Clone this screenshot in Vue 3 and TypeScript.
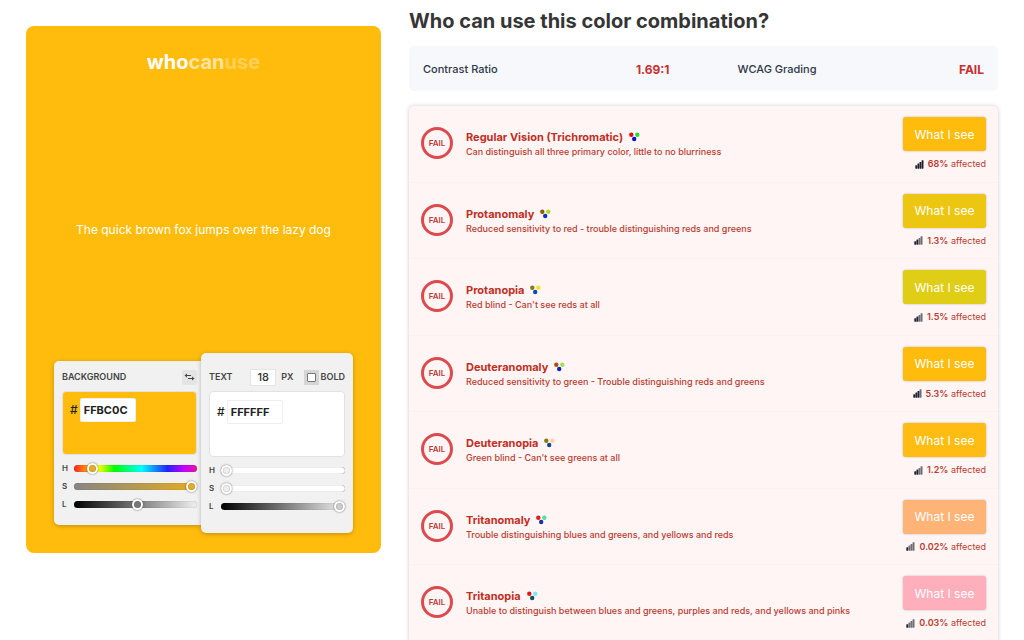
<script setup lang="ts">
import { ref } from 'vue'

interface Vision {
  name: string
  text: string
  dots: [string, string, string]
  color: string
  share: string
  bars: number
}

const visions: Vision[] = [
  { name: 'Regular Vision (Trichromatic)', text: 'Can distinguish all three primary color, little to no blurriness', dots: ['#e01010', '#22dd33', '#1010d0'], color: '#ffbc0c', share: '68%', bars: 4 },
  { name: 'Protanomaly', text: 'Reduced sensitivity to red - trouble distinguishing reds and greens', dots: ['#8f5a10', '#a5dd22', '#1030c8'], color: '#edc611', share: '1.3%', bars: 2 },
  { name: 'Protanopia', text: "Red blind - Can't see reds at all", dots: ['#857a18', '#f0e62a', '#1048b4'], color: '#dfcd16', share: '1.5%', bars: 2 },
  { name: 'Deuteranomaly', text: 'Reduced sensitivity to green - Trouble distinguishing reds and greens', dots: ['#a85018', '#a0e060', '#1020b8'], color: '#ffbc0c', share: '5.3%', bars: 3 },
  { name: 'Deuteranopia', text: "Green blind - Can't see greens at all", dots: ['#8a7a10', '#ffd0a4', '#10459c'], color: '#ffbc12', share: '1.2%', bars: 2 },
  { name: 'Tritanomaly', text: 'Trouble distinguishing blues and greens, and yellows and reds', dots: ['#e01c20', '#52df9a', '#1830a8'], color: '#ffb477', share: '0.02%', bars: 1 },
  { name: 'Tritanopia', text: 'Unable to distinguish between blues and greens, purples and reds, and yellows and pinks', dots: ['#e01820', '#7fe6f0', '#0c5258'], color: '#ffafbb', share: '0.03%', bars: 1 },
]

const background = ref('FFBC0C')
const foreground = ref('FFFFFF')
const fontSize = ref('18')
const bold = ref(false)
const bgHsl = ref({ h: 43, s: 100, l: 52 })
const textHsl = ref({ h: 0, s: 0, l: 100 })
</script>

<template>
  <main class="page">
    <section class="preview">
      <h2 class="logo"><span>who</span><span class="can">can</span><span class="use">use</span></h2>
      <p class="sample">The quick brown fox jumps over the lazy dog</p>
      <div class="panels">
        <div class="panel panel-bg">
          <div class="head">
            <span class="label">BACKGROUND</span>
            <button class="swap" type="button" aria-label="Swap colors">
              <svg width="11" height="8" viewBox="0 0 11 8" fill="none" stroke="#444" stroke-width="1">
                <path d="M2 2.5H7" />
                <path d="M4 5.5H9" />
                <path d="M3 0.5L0.5 2.5L3 4.5Z" fill="#444" stroke="none" />
                <path d="M8 3.5L10.5 5.5L8 7.5Z" fill="#444" stroke="none" />
              </svg>
            </button>
          </div>
          <div class="swatch swatch-bg">
            <label for="bg-hex">#</label>
            <input id="bg-hex" v-model="background" class="hex" type="text" />
          </div>
          <div class="slider">
            <label for="bg-h">H</label>
            <input id="bg-h" v-model="bgHsl.h" class="hue" type="range" min="0" max="360" />
          </div>
          <div class="slider">
            <label for="bg-s">S</label>
            <input id="bg-s" v-model="bgHsl.s" class="sat" type="range" min="0" max="100" />
          </div>
          <div class="slider">
            <label for="bg-l">L</label>
            <input id="bg-l" v-model="bgHsl.l" class="lum" type="range" min="0" max="100" />
          </div>
        </div>
        <div class="panel panel-text">
          <div class="head">
            <span class="label">TEXT</span>
            <input id="size" v-model="fontSize" class="size" type="text" />
            <label class="label unit" for="size">PX</label>
            <label class="label bold"><span class="tick"><input v-model="bold" type="checkbox" /></span>BOLD</label>
          </div>
          <div class="swatch swatch-text">
            <label for="text-hex">#</label>
            <input id="text-hex" v-model="foreground" class="hex" type="text" />
          </div>
          <div class="slider">
            <label for="text-h">H</label>
            <input id="text-h" v-model="textHsl.h" class="plain" type="range" min="0" max="360" />
          </div>
          <div class="slider">
            <label for="text-s">S</label>
            <input id="text-s" v-model="textHsl.s" class="plain" type="range" min="0" max="100" />
          </div>
          <div class="slider">
            <label for="text-l">L</label>
            <input id="text-l" v-model="textHsl.l" class="lum end" type="range" min="0" max="100" />
          </div>
        </div>
      </div>
    </section>

    <section class="results">
      <h1>Who can use this color combination?</h1>
      <dl class="summary">
        <div><dt>Contrast Ratio</dt><dd>1.69:1</dd></div>
        <div><dt>WCAG Grading</dt><dd>FAIL</dd></div>
      </dl>
      <ul class="list">
        <li v-for="v in visions" :key="v.name" class="row">
          <span class="badge">FAIL</span>
          <div class="info">
            <h3>
              {{ v.name }}
              <svg class="dots" width="11" height="10" viewBox="0 0 11 10">
                <circle cx="2.3" cy="2.7" r="2.2" :fill="v.dots[0]" />
                <circle cx="8.3" cy="2.7" r="2.2" :fill="v.dots[1]" />
                <circle cx="5.2" cy="7" r="2.2" :fill="v.dots[2]" />
              </svg>
            </h3>
            <p>{{ v.text }}</p>
          </div>
          <div class="side">
            <button class="see" type="button" :style="{ backgroundColor: v.color }">What I see</button>
            <p class="affected">
              <svg width="9" height="9" viewBox="0 0 9 9" fill="#20222f">
                <rect
                  v-for="n in 4"
                  :key="n"
                  :x="(n - 1) * 2.1 + 0.3"
                  :y="7 - n * 1.7"
                  width="1.9"
                  :height="n * 1.7 + 1.7"
                  rx="0.4"
                  :opacity="n <= v.bars ? 1 : 0.65"
                />
              </svg>
              <span><b>{{ v.share }}</b> affected</span>
            </p>
          </div>
        </li>
      </ul>
    </section>
  </main>
</template>

<style>
body {
  margin: 0;
  background: #fff;
}
</style>

<style scoped>
* {
  box-sizing: border-box;
}

.page {
  display: grid;
  grid-template-columns: 355fr 589fr;
  column-gap: 28px;
  align-items: start;
  padding: 0 26px;
  font-family: Inter, "Liberation Sans", sans-serif;
  color: #2d3748;
}

h1,
h2,
h3,
p,
dl,
dd,
ul {
  margin: 0;
  padding: 0;
}

input,
button {
  margin: 0;
  font-family: inherit;
}

.preview {
  display: flex;
  flex-direction: column;
  min-height: 527px;
  margin-top: 26px;
  padding: 24px 28px 20px;
  border-radius: 8px;
  background: #ffbc0c;
  color: #fff;
}

.logo {
  font-size: 20px;
  line-height: 24px;
  font-weight: 700;
  text-align: center;
}

.can {
  opacity: 0.6;
}

.use {
  opacity: 0.3;
}

.sample {
  flex: 1;
  display: flex;
  align-items: center;
  justify-content: center;
  padding-top: 32px;
  font-size: 12px;
  line-height: 16px;
}

.panels {
  display: flex;
  align-items: center;
}

.panel {
  min-width: 0;
  border-radius: 5px;
  background: #f1f1f1;
  color: #444;
  box-shadow: 0 1px 4px rgba(0, 0, 0, 0.25);
}

.panel-bg {
  flex: 1 1 147px;
  padding: 6px 4px 12px 8px;
  border-radius: 5px 0 0 5px;
}

.panel-text {
  flex: 1 1 152px;
  position: relative;
  padding: 14px 8px 18px;
}

.head {
  display: flex;
  align-items: center;
  height: 20px;
  margin-bottom: 4px;
}

.label {
  font-size: 9px;
  line-height: 12px;
  font-weight: 600;
}

.swap {
  display: flex;
  align-items: center;
  justify-content: center;
  width: 15px;
  height: 15px;
  margin-left: auto;
  padding: 0;
  border: 0;
  border-radius: 2px;
  background: #e4e4e4;
}

.size {
  width: 26px;
  height: 17px;
  margin-left: auto;
  padding: 0;
  border: 1px solid #e4e4e4;
  background: #fff;
  color: #333;
  font-size: 11px;
  font-weight: 500;
  text-align: center;
}

.unit {
  margin: 0 10px 0 5px;
}

.bold {
  display: flex;
  align-items: center;
  gap: 2px;
}

.tick {
  display: flex;
  padding: 3px;
  background: #d6d6d6;
}

.tick input {
  appearance: none;
  width: 9px;
  height: 9px;
  border: 1px solid #777;
  border-radius: 1px;
  background: #fff;
}

.swatch {
  display: flex;
  align-items: flex-start;
  gap: 2px;
  height: 64px;
  margin-bottom: 4px;
  padding: 8px 7px;
  border: 1px solid #e2e2e2;
  border-radius: 4px;
  color: #222;
  font-size: 12px;
  line-height: 24px;
  font-weight: 500;
}

.swatch-bg {
  padding-top: 6px;
  background: #ffbc0c;
}

.swatch-text {
  height: 66px;
  background: #fff;
}

.hex {
  width: 56px;
  height: 24px;
  padding: 0 3px;
  border: 1px solid #eee;
  border-radius: 2px;
  background: #fff;
  color: #222;
  font-size: 11px;
  font-weight: 700;
}

.slider {
  display: grid;
  grid-template-columns: 8px minmax(0, 1fr);
  align-items: center;
  gap: 4px;
  height: 18px;
  font-size: 8px;
  font-weight: 600;
}

.slider input {
  appearance: none;
  width: 100%;
  height: 7px;
  border-radius: 4px;
  box-shadow: inset 0 0 1px rgba(0, 0, 0, 0.4);
}

.slider input::-webkit-slider-thumb {
  appearance: none;
  width: 11px;
  height: 11px;
  border: 2px solid #fff;
  border-radius: 50%;
  background: transparent;
  box-shadow: 0 0 2px rgba(0, 0, 0, 0.6), inset 0 0 1px rgba(0, 0, 0, 0.6);
}

.hue {
  background: linear-gradient(90deg, #f22, #ff0 20%, #0f0 33%, #0ff 55%, #22f 76%, #c0f 90%, #e0189c);
}

.slider .hue::-webkit-slider-thumb,
.slider .sat::-webkit-slider-thumb {
  background: #e0ae28;
}

.sat {
  background: linear-gradient(90deg, #858585, #e5ac20);
}

.lum {
  background: linear-gradient(90deg, #000, #777 50%, #f0f0f0);
}

.slider .lum::-webkit-slider-thumb {
  background: #777;
}

.slider .end::-webkit-slider-thumb {
  background: #ccc;
}

.slider .plain {
  background: #fff;
  box-shadow: inset 0 0 1px rgba(0, 0, 0, 0.7);
}

.slider .plain::-webkit-slider-thumb {
  background: #eee;
}

.results {
  min-width: 0;
}

h1 {
  padding-top: 8px;
  color: #353535;
  font-size: 20px;
  line-height: 26px;
  font-weight: 700;
}

.summary {
  display: grid;
  grid-template-columns: 1fr 1fr;
  column-gap: 68px;
  margin: 12px 0 15px;
  padding: 15px 14px 13px;
  border-radius: 5px;
  background: #f7f8fc;
  font-size: 11px;
  line-height: 17px;
  font-weight: 500;
}

.summary div {
  display: flex;
  justify-content: space-between;
}

.summary dd {
  color: #c53030;
  font-size: 12px;
  font-weight: 700;
}

.list {
  display: flex;
  flex-direction: column;
  min-height: 536px;
  border-radius: 5px 5px 0 0;
  background: #fff5f5;
  list-style: none;
  box-shadow: 0 0 4px rgba(0, 0, 0, 0.2);
}

.row {
  flex: 1;
  display: flex;
  align-items: flex-start;
  gap: 13px;
  padding: 11px 12px 0;
  border-bottom: 1px solid #f9f2f0;
}

.badge {
  display: flex;
  align-items: center;
  justify-content: center;
  width: 32px;
  height: 32px;
  margin-top: 10px;
  border: 3px solid #dd4a4e;
  border-radius: 50%;
  color: #b83a38;
  font-size: 8px;
  font-weight: 600;
}

.info {
  flex: 1;
  min-width: 0;
  padding-top: 12px;
  color: #bf2f1f;
}

h3 {
  display: flex;
  align-items: center;
  gap: 6px;
  font-size: 11px;
  line-height: 16px;
  font-weight: 700;
}

.info p {
  color: #b83c30;
  font-size: 9px;
  line-height: 14px;
  font-weight: 500;
}

.side {
  display: flex;
  flex-direction: column;
  align-items: flex-end;
}

.see {
  width: 83px;
  height: 34px;
  padding: 0;
  border: 0;
  border-radius: 3px;
  color: #fff;
  font-size: 12px;
  box-shadow: 0 0 2px rgba(0, 0, 0, 0.3);
}

.affected {
  display: flex;
  align-items: center;
  gap: 4px;
  margin-top: 7px;
  color: #b83c30;
  font-size: 9px;
  line-height: 12px;
}

.affected b {
  font-weight: 600;
}
</style>
